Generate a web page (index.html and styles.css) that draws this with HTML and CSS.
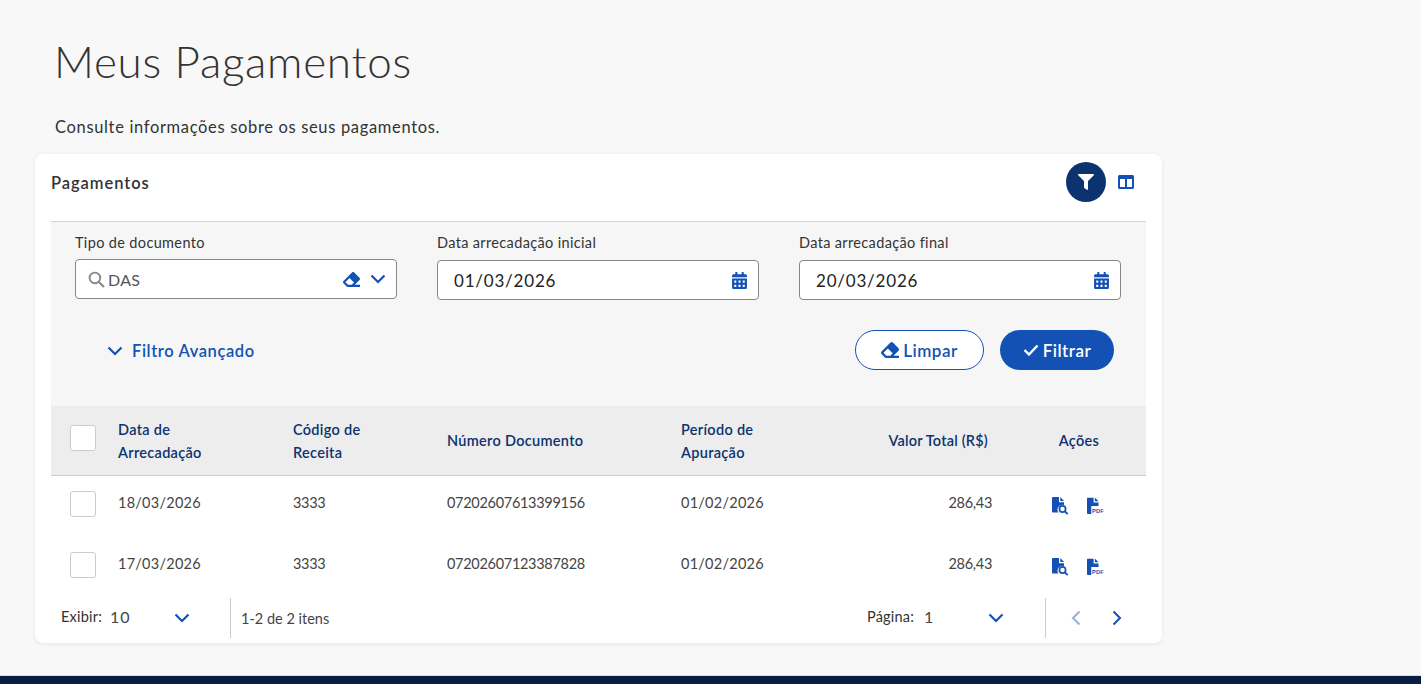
FILE: index.html
```html
<!DOCTYPE html>
<html lang="pt-BR">
<head>
    <meta charset="UTF-8">
    <meta name="viewport" content="width=device-width, initial-scale=1.0">
    <title>Meus Pagamentos</title>
    <link rel="stylesheet" href="styles.css">
</head>
<body>
    <svg class="icon-defs" width="0" height="0" aria-hidden="true">
        <symbol id="i-eraser" viewBox="0 0 512 512"><path d="M497.941 273.941c18.745-18.745 18.745-49.137 0-67.882l-160-160c-18.745-18.745-49.136-18.746-67.883 0l-256 256c-18.745 18.745-18.745 49.137 0 67.882l96 96A48.004 48.004 0 0 0 144 480h356c6.627 0 12-5.373 12-12v-40c0-6.627-5.373-12-12-12H355.883l142.058-142.059zm-302.627-62.627l137.373 137.373L265.373 416H150.628l-80-80 124.686-124.686z"/></symbol>
        <symbol id="i-calendar" viewBox="0 0 448 512"><path d="M0 464c0 26.5 21.5 48 48 48h352c26.5 0 48-21.5 48-48V192H0v272zm320-196c0-6.6 5.4-12 12-12h40c6.6 0 12 5.4 12 12v40c0 6.6-5.4 12-12 12h-40c-6.6 0-12-5.4-12-12v-40zm0 128c0-6.6 5.4-12 12-12h40c6.6 0 12 5.4 12 12v40c0 6.6-5.4 12-12 12h-40c-6.6 0-12-5.4-12-12v-40zM192 268c0-6.6 5.4-12 12-12h40c6.6 0 12 5.4 12 12v40c0 6.6-5.4 12-12 12h-40c-6.6 0-12-5.4-12-12v-40zm0 128c0-6.6 5.4-12 12-12h40c6.6 0 12 5.4 12 12v40c0 6.6-5.4 12-12 12h-40c-6.6 0-12-5.4-12-12v-40zM64 268c0-6.6 5.4-12 12-12h40c6.6 0 12 5.4 12 12v40c0 6.6-5.4 12-12 12H76c-6.6 0-12-5.4-12-12v-40zm0 128c0-6.6 5.4-12 12-12h40c6.6 0 12 5.4 12 12v40c0 6.6-5.4 12-12 12H76c-6.6 0-12-5.4-12-12v-40zM400 64h-48V16c0-8.8-7.2-16-16-16h-32c-8.8 0-16 7.2-16 16v48H160V16c0-8.8-7.2-16-16-16h-32c-8.8 0-16 7.2-16 16v48H48C21.5 64 0 85.5 0 112v48h448v-48c0-26.5-21.5-48-48-48z"/></symbol>
        <symbol id="i-chevron" viewBox="0 0 16 10"><path d="M1.5 1.5L8 8l6.5-6.5" fill="none" stroke="currentColor" stroke-width="2.2"/></symbol>
        <symbol id="i-doc-search" viewBox="0 0 17 18">
            <path d="M1.2 0H7v5.2h5V8a5 5 0 0 0-5.6 7.6H1.2C.5 15.600 0 15.100 0 14.400V1.200C0 .5.500 0 1.200 0zM8.300 0l3.700 3.900H8.300z"/>
            <circle cx="10.500" cy="12" r="3.100" fill="none" stroke="currentColor" stroke-width="1.700"/>
            <path d="M12.700 14.200l3 3" fill="none" stroke="currentColor" stroke-width="1.900"/>
        </symbol>
        <symbol id="i-doc-pdf" viewBox="0 0 18 18">
            <path d="M1.200 0H7v5.200h5.200V9H4.500v8.600H1.200C.5 17.600 0 17.100 0 16.400V1.200C0 .5.500 0 1.200 0zM8.300 0l3.900 3.900H8.300z"/>
        </symbol>
    </svg>

    <main class="page">
        <h1 class="page-title">Meus Pagamentos</h1>
        <p class="page-sub">Consulte informações sobre os seus pagamentos.</p>

        <section class="card">
            <div class="card-head">
                <h2 class="card-title">Pagamentos</h2>
                <div class="card-tools">
                    <button class="tool-filter" aria-label="Filtro">
                        <svg viewBox="0 0 512 512" width="16" height="16"><path d="M487.976 0H24.028C2.71 0-8.047 25.866 7.058 40.971L192 225.941V432c0 7.831 3.821 15.170 10.237 19.662l80 55.980C298.020 518.690 320 507.493 320 487.980V225.941l184.947-184.970C520.021 25.896 509.338 0 487.976 0z"/></svg>
                    </button>
                    <button class="tool-columns" aria-label="Colunas">
                        <svg viewBox="0 0 512 512" width="16" height="16"><path d="M464 32H48C21.490 32 0 53.490 0 80v352c0 26.510 21.490 48 48 48h416c26.510 0 48-21.490 48-48V80c0-26.510-21.490-48-48-48zM224 416H64V160h160v256zm224 0H288V160h160v256z"/></svg>
                    </button>
                </div>
            </div>

            <div class="filters">
                <div class="filter-fields">
                    <div class="field field-select">
                        <label class="field-label">Tipo de documento</label>
                        <div class="input">
                            <svg class="icon-search" viewBox="0 0 16 16" width="17" height="17"><circle cx="6.500" cy="6.500" r="5" fill="none" stroke="currentColor" stroke-width="1.800"/><path d="M10.300 10.300l4.700 4.700" fill="none" stroke="currentColor" stroke-width="2"/></svg>
                            <span class="input-text-das">DAS</span>
                            <svg class="icon-blue icon-eraser"><use href="#i-eraser"/></svg>
                            <svg class="icon-blue icon-chevron"><use href="#i-chevron"/></svg>
                        </div>
                    </div>
                    <div class="field">
                        <label class="field-label">Data arrecadação inicial</label>
                        <div class="input input-date">
                            <span class="input-text">01/03/2026</span>
                            <svg class="icon-blue icon-calendar"><use href="#i-calendar"/></svg>
                        </div>
                    </div>
                    <div class="field">
                        <label class="field-label">Data arrecadação final</label>
                        <div class="input input-date">
                            <span class="input-text">20/03/2026</span>
                            <svg class="icon-blue icon-calendar"><use href="#i-calendar"/></svg>
                        </div>
                    </div>
                </div>
                <div class="filter-actions">
                    <a class="advanced">
                        <svg class="icon-blue icon-chevron"><use href="#i-chevron"/></svg>
                        Filtro Avançado
                    </a>
                    <div class="buttons">
                        <button class="btn btn-secondary">
                            <svg class="icon-eraser-btn"><use href="#i-eraser"/></svg>Limpar
                        </button>
                        <button class="btn btn-primary">
                            <svg viewBox="0 0 16 12" width="16" height="12"><path d="M1.500 6l4.500 4.500L14.500 1.500" fill="none" stroke="currentColor" stroke-width="2.400"/></svg>Filtrar
                        </button>
                    </div>
                </div>
            </div>

            <table class="pay-table">
                <colgroup>
                    <col class="col-check"><col class="col-date"><col class="col-code">
                    <col class="col-number"><col class="col-period"><col class="col-value"><col class="col-actions">
                </colgroup>
                <thead>
                    <tr>
                        <th class="head-check"><span class="checkbox"></span></th>
                        <th>Data de<br>Arrecadação</th>
                        <th>Código de<br>Receita</th>
                        <th>Número Documento</th>
                        <th>Período de<br>Apuração</th>
                        <th class="head-value">Valor Total (R$)</th>
                        <th class="head-actions">Ações</th>
                    </tr>
                </thead>
                <tbody>
                    <tr>
                        <td class="cell-check"><span class="checkbox"></span></td>
                        <td>18/03/2026</td>
                        <td class="cell-digits">3333</td>
                        <td class="cell-digits">07202607613399156</td>
                        <td>01/02/2026</td>
                        <td class="cell-value">286,43</td>
                        <td class="cell-actions">
                            <svg class="icon-blue icon-doc"><use href="#i-doc-search"/></svg>
                            <svg class="icon-blue icon-doc" viewBox="0 0 18 18"><use href="#i-doc-pdf"/><text class="pdf-text" x="5.200" y="16.800">PDF</text></svg>
                        </td>
                    </tr>
                    <tr>
                        <td class="cell-check"><span class="checkbox"></span></td>
                        <td>17/03/2026</td>
                        <td class="cell-digits">3333</td>
                        <td class="cell-digits">07202607123387828</td>
                        <td>01/02/2026</td>
                        <td class="cell-value">286,43</td>
                        <td class="cell-actions">
                            <svg class="icon-blue icon-doc"><use href="#i-doc-search"/></svg>
                            <svg class="icon-blue icon-doc" viewBox="0 0 18 18"><use href="#i-doc-pdf"/><text class="pdf-text" x="5.200" y="16.800">PDF</text></svg>
                        </td>
                    </tr>
                </tbody>
            </table>

            <div class="pager">
                <div class="pager-size">
                    <span class="pager-label">Exibir:</span>
                    <span class="pager-value">10</span>
                    <svg class="icon-blue icon-chevron"><use href="#i-chevron"/></svg>
                </div>
                <div class="pager-count">1-2 de 2 itens</div>
                <div class="pager-page">
                    <span class="pager-label">Página:</span>
                    <span class="pager-value">1</span>
                    <svg class="icon-blue icon-chevron"><use href="#i-chevron"/></svg>
                </div>
                <div class="pager-nav">
                    <svg class="arrow arrow-off" viewBox="0 0 10 16"><path d="M8.500 1.500L2 8l6.500 6.500" fill="none" stroke="currentColor" stroke-width="2"/></svg>
                    <svg class="arrow" viewBox="0 0 10 16"><path d="M1.500 1.500L8 8l-6.500 6.500" fill="none" stroke="currentColor" stroke-width="2"/></svg>
                </div>
            </div>
        </section>
    </main>

    <footer class="site-foot"></footer>
</body>
</html>
```

FILE: styles.css
```css
* {
    box-sizing: border-box;
}
body {
    margin: 0;
    height: 684px;
    overflow: hidden;
    background-color: #f8f8f8;
    color: #333;
    font-family: Lato, 'Open Sans', sans-serif;
    font-size: 14px;
}
.icon-defs {
    position: absolute;
}
.page {
    height: 675px;
    padding: 0 0 0 35px;
}
.page-title {
    margin: 0;
    padding: 35px 0 0 19px;
    height: 118px;
    font-size: 44px;
    line-height: 52px;
    font-weight: 300;
    letter-spacing: 0.7px;
}
.page-sub {
    margin: 0;
    padding-left: 20px;
    height: 36px;
    font-size: 16.500px;
    line-height: 19px;
    letter-spacing: 0.66px;
}
.card {
    width: 1127px;
    height: 489px;
    padding: 0 16px;
    background-color: white;
    border-radius: 8px;
    box-shadow: 0 1px 4px rgba(0, 0, 0, 0.08);
}
.card-head {
    height: 68px;
    display: flex;
    justify-content: space-between;
    border-bottom: 1px solid #d4d4d4;
}
.card-title {
    margin: 0;
    padding-top: 19px;
    font-size: 16.500px;
    line-height: 20px;
    font-weight: 600;
    letter-spacing: 0.95px;
}
.card-tools {
    display: flex;
    align-items: flex-start;
    padding-top: 8px;
}
.card-tools button {
    border: none;
    padding: 0;
    display: flex;
    align-items: center;
    justify-content: center;
}
.tool-filter {
    width: 40px;
    height: 40px;
    border-radius: 50%;
    background-color: #0c326f;
    fill: white;
}
.tool-columns {
    width: 40px;
    height: 40px;
    background: none;
    fill: #1351b4;
}
.filters {
    height: 184px;
    background-color: #f6f6f6;
}
.filter-fields {
    display: grid;
    grid-template-columns: repeat(3, 322px);
    column-gap: 40px;
    padding: 12px 24px 0;
}
.field-label {
    display: block;
    height: 26px;
    font-size: 14.500px;
    line-height: 17px;
    font-weight: 400;
    letter-spacing: 0.35px;
}
.input {
    height: 40px;
    display: flex;
    align-items: center;
    background-color: white;
    border: 1px solid #888;
    border-radius: 4px;
    padding: 0 10px 0 12px;
    font-size: 16px;
}
.field-select .input {
    margin-top: -1px;
}
.input-date {
    padding: 0 11px 0 16px;
    justify-content: space-between;
}
.input-text {
    font-size: 17px;
    letter-spacing: 0.8px;
    color: #222;
}
.input-text-das {
    flex: 1;
    margin-left: 3px;
    letter-spacing: 0.3px;
    color: #555;
}
.icon-search {
    color: #888;
}
.icon-blue {
    color: #1351b4;
    fill: #1351b4;
}
.icon-eraser {
    width: 17px;
    height: 17px;
    margin-right: 10px;
}
.icon-chevron {
    width: 16px;
    height: 10px;
}
.icon-calendar {
    width: 15px;
    height: 17px;
}
.filter-actions {
    display: flex;
    justify-content: space-between;
    align-items: center;
    padding: 30px 32px 0 56px;
}
.advanced {
    display: flex;
    align-items: center;
    gap: 9px;
    padding-top: 2px;
    color: #1351b4;
    font-size: 16.500px;
    font-weight: 600;
    letter-spacing: 0.6px;
}
.buttons {
    display: flex;
    gap: 16px;
}
.btn {
    height: 40px;
    border-radius: 20px;
    display: flex;
    align-items: center;
    justify-content: center;
    gap: 4px;
    font-family: inherit;
    font-size: 17px;
    font-weight: 600;
    letter-spacing: 0.5px;
}
.btn-secondary {
    width: 129px;
    background-color: white;
    color: #1351b4;
    border: 1px solid #1351b4;
    fill: #1351b4;
}
.btn-primary {
    width: 114px;
    background-color: #1351b4;
    color: white;
    border: none;
}
.icon-eraser-btn {
    width: 18px;
    height: 18px;
}
.pay-table {
    width: 1095px;
    margin-bottom: 1px;
    border-collapse: collapse;
    table-layout: fixed;
}
.col-check { width: 67px; }
.col-date { width: 175px; }
.col-code { width: 154px; }
.col-number { width: 234px; }
.col-period { width: 150px; }
.col-value { width: 161px; }
.col-actions { width: 154px; }
.pay-table thead tr {
    height: 69px;
    background-color: #ededed;
    border-bottom: 1px solid #ccc;
}
.pay-table th {
    padding: 1px 0 0;
    text-align: left;
    color: #0c326f;
    font-size: 14.500px;
    line-height: 23px;
    font-weight: 600;
    letter-spacing: 0.3px;
}
.pay-table .head-check {
    padding: 0 0 5px;
}
.pay-table td {
    height: 61px;
    padding: 0 0 7px;
    color: #444;
    font-size: 14.500px;
    letter-spacing: 0.25px;
}
.pay-table .cell-check {
    padding-bottom: 4px;
}
.pay-table .cell-digits {
    letter-spacing: -0.3px;
}
.pay-table .checkbox {
    display: block;
    width: 26px;
    height: 26px;
    margin-left: 19px;
    background-color: white;
    border: 1px solid #ccc;
    border-radius: 3px;
}
.pay-table .head-value {
    text-align: right;
    padding-right: 4px;
    letter-spacing: 0.2px;
}
.pay-table .head-actions {
    text-align: center;
    padding-left: 20px;
}
.pay-table .cell-value {
    text-align: right;
    letter-spacing: -0.3px;
}
.pay-table .cell-actions {
    padding-left: 60px;
    white-space: nowrap;
}
.icon-doc {
    width: 17px;
    height: 18px;
    margin: 8px 14px 0 0;
    vertical-align: middle;
}
.pdf-text {
    font-family: 'Liberation Sans', sans-serif;
    font-size: 6px;
    font-weight: 700;
}
.pager {
    height: 40px;
    display: flex;
    align-items: center;
}
.pager-size {
    width: 180px;
    height: 40px;
    display: flex;
    align-items: center;
    padding-left: 10px;
    border-right: 1px solid #ccc;
}
.pager-label {
    margin-top: -3px;
    font-size: 14.500px;
    letter-spacing: 0.2px;
}
.pager-value {
    flex: 1;
    margin: -3px 0 0 8px;
    color: #444;
    font-size: 16px;
    letter-spacing: 1px;
}
.pager-page .pager-value {
    margin-left: 10px;
}
.pager-size .icon-chevron {
    margin-right: 40px;
}
.pager-count {
    width: 636px;
    padding: 0 0 0 10px;
    color: #444;
    font-size: 14.500px;
}
.pager-page {
    width: 179px;
    height: 40px;
    display: flex;
    align-items: center;
    border-right: 1px solid #ccc;
}
.pager-page .icon-chevron {
    margin-right: 41px;
}
.pager-nav {
    flex: 1;
    display: flex;
    gap: 31px;
    padding-left: 25px;
}
.arrow {
    width: 10px;
    height: 16px;
    color: #1351b4;
}
.arrow-off {
    opacity: 0.45;
}
.site-foot {
    height: 9px;
    background-color: #071d41;
    border-top: 1px solid #ddd;
}
```
